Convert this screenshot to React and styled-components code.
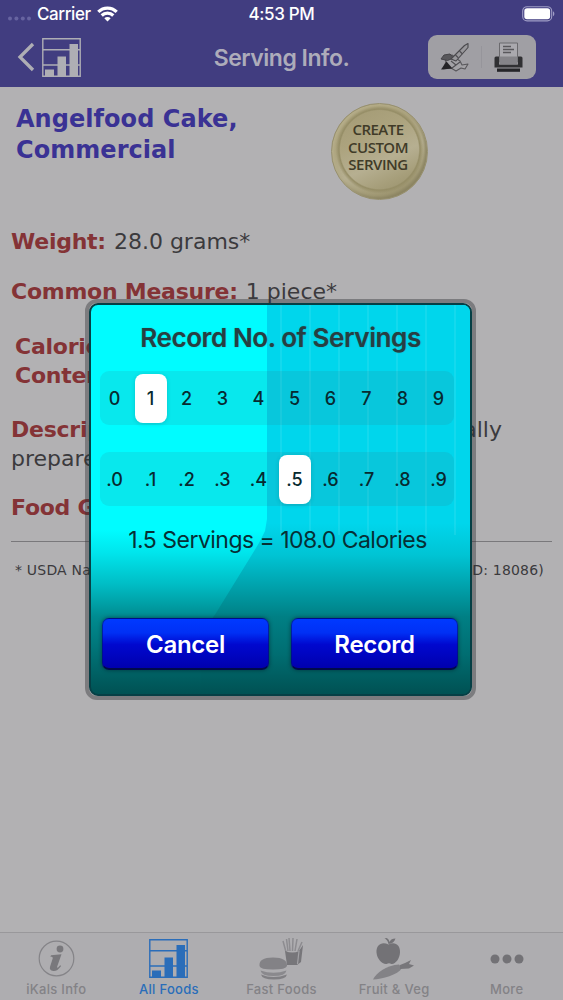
import React from 'react'
import styled, { createGlobalStyle } from "styled-components";
import {useState} from "react"

const GlobalStyle = createGlobalStyle`
  * { box-sizing: border-box; }
  body {
    margin: 0;
    background: #b2b1b3;
    font-family: Inter, "Liberation Sans", sans-serif;
  }
`;

const Screen = styled.div`
  position: relative;
  width: 563px;
  height: 1000px;
  display: flex;
  flex-direction: column;
  overflow: hidden;
  background: #b2b1b3;
`;

const Header = styled.header`
  height: 87px;
  background: #413d80;
`;

const StatusBar = styled.div`
  height: 28px;
  padding: 0 8px;
  display: grid;
  grid-template-columns: 1fr auto 1fr;
  align-items: center;
  color: #fff;
  font-size: 17px;
  font-weight: 500;
`;
const CarrierBox = styled.div`
  display: flex;
  align-items: center;
  gap: 6px;
`;
const CarrierName = styled.span`
  letter-spacing: -0.4px;
`;
const Clock = styled.span`
  letter-spacing: -0.35px;
`;
const BatteryBox = styled.div`
  display: flex;
  justify-content: flex-end;
`;

const NavBar = styled.div`
  height: 58px;
  padding: 0 27px 0 17px;
  display: grid;
  grid-template-columns: 1fr auto 1fr;
  align-items: center;
`;
const BackButton = styled.button`
  display: flex;
  align-items: center;
  gap: 7px;
  padding: 0;
  border: none;
  background: none;
  color: #aeaeb4;
`;
const NavTitle = styled.h1`
  margin: 1px 0 0 10px;
  font-size: 23px;
  font-weight: 600;
  letter-spacing: -0.5px;
  color: #adacba;
`;
const Tools = styled.div`
  justify-self: end;
  width: 108px;
  height: 44px;
  display: flex;
  border-radius: 9px;
  background: #a09fa4;
`;
const Tool = styled.button`
  flex: 1;
  display: flex;
  align-items: center;
  justify-content: center;
  margin: 11px 0;
  padding: 0;
  border: none;
  border-right: 1px solid ${(props) => props.$divided ? "#96959b" : "transparent"};
  background: none;
`;

const Content = styled.main`
  flex: 1;
  padding: 1px 11px 0;
  font-family: "DejaVu Sans", sans-serif;
  color: #3b3a3d;
`;
const TitleRow = styled.div`
  height: 129px;
  display: flex;
  padding: 15px 0 0 5px;
`;
const FoodName = styled.h2`
  width: 315px;
  margin: 1px 0 0;
  font-size: 24px;
  line-height: 31px;
  letter-spacing: 0.05px;
  color: #3a3294;
`;
const CustomServing = styled.button`
  width: 97px;
  height: 97px;
  padding: 0 3px 8px 0;
  border: 1px solid #97906f;
  border-radius: 50%;
  background:
    radial-gradient(circle at 50% 48%, transparent 0 57%, #958d66 59%, transparent 64%),
    linear-gradient(155deg, #a19872 0%, #aca37e 35%, #b6af91 58%, #a69e7a 75%, #8f8762 100%);
  box-shadow: inset 2px 2px 3px #b6ae8a, inset -2px -2px 3px #8b8462;
  font-family: "Open Sans", sans-serif;
  font-size: 15px;
  font-weight: 600;
  line-height: 17.5px;
  letter-spacing: -0.5px;
  color: #403b28;
`;
const Line = styled.p`
  width: ${(props) => props.$width || "auto"};
  height: ${(props) => props.$height}px;
  margin: 0 0 ${(props) => props.$gap || 0}px;
  padding-left: ${(props) => props.$indent || 0}px;
  display: flex;
  justify-content: ${(props) => props.$split ? "space-between" : "flex-start"};
  gap: 8px;
  font-size: 22px;
  line-height: ${(props) => props.$height}px;
  white-space: nowrap;
`;
const Label = styled.b`
  color: #843336;
  letter-spacing: -0.25px;
`;
const Rule = styled.hr`
  margin: 19px 0 18px;
  border: none;
  border-top: 1px solid #79787b;
`;
const Source = styled.div`
  display: flex;
  justify-content: space-between;
  padding: 0 8px 0 4px;
  font-size: 14px;
  line-height: 20px;
  letter-spacing: 0.2px;
`;

const TabBar = styled.nav`
  height: 68px;
  display: grid;
  grid-template-columns: repeat(5, 1fr);
  border-top: 1px solid #99989b;
  background: #aeadb0;
`;
const Tab = styled.button`
  display: flex;
  flex-direction: column;
  align-items: center;
  padding: 4px 0 0;
  border: none;
  background: none;
  font-family: inherit;
  font-size: 13px;
  line-height: 19px;
  font-weight: 500;
  letter-spacing: 0.3px;
  color: ${(props) => props.$active ? "#2a6db9" : "#838286"};
`;
const TabIcon = styled.span`
  height: 43px;
  display: flex;
  align-items: center;
`;

const Backdrop = styled.div`
  position: absolute;
  inset: 0;
  padding: 299px 0 0 85px;
  display: flex;
  align-items: flex-start;
`;
const Dialog = styled.section`
  position: relative;
  width: 391px;
  height: 401px;
  border: 4px solid rgba(50, 50, 56, .42);
  border-radius: 12px;
`;
const Panel = styled.div`
  position: relative;
  height: 393px;
  padding: 20px 8px 0;
  overflow: hidden;
  border: 2px solid #063f45;
  border-radius: 9px;
  display: flex;
  flex-direction: column;
  align-items: center;
  background: linear-gradient(#00fcff 0, #00fcff 225px, #00e5ec 248px, #00bcc4 280px, #008b90 312px, #006f73 350px, #005153 100%);
`;
const Shade = styled.div`
  position: absolute;
  inset: 0;
  clip-path: polygon(176px 0, 100% 0, 100% 100%, 110px 100%, 110px 330px, 125px 308px, 168px 238px, 174px 226px, 176px 214px);
  background:
    linear-gradient(#00d6ec 0, #00d6ec 218px, #00c4d4 250px, #00a1ab 282px, #007f84 312px, #006d71 350px, #005153 100%);
`;
const Streaks = styled.div`
  position: absolute;
  inset: 0 0 auto 176px;
  height: 230px;
  background: repeating-linear-gradient(90deg, transparent 0 13px, rgba(255, 255, 255, .08) 13px 15px, transparent 15px 29px);
`;
const DialogTitle = styled.h3`
  position: relative;
  margin: 0;
  height: 26px;
  line-height: 26px;
  font-size: 26px;
  font-weight: 600;
  letter-spacing: -0.4px;
  color: #263f43;
  text-shadow: 0 0 1px rgba(70, 50, 50, .5);
  white-space: nowrap;
`;
const Segments = styled.div`
  position: relative;
  width: 354px;
  height: 54px;
  margin: ${(props) => props.$top}px 8px 0 0;
  display: grid;
  grid-template-columns: repeat(10, 36px);
  justify-content: center;
  align-items: center;
  border-radius: 9px;
  background: rgba(60, 100, 115, .13);
`;
const Segment = styled.button`
  height: 49px;
  margin: 0 2px;
  padding: 0;
  border: none;
  border-radius: 8px;
  background: ${(props) => props.$selected ? "#fff" : "none"};
  box-shadow: ${(props) => props.$selected ? "0 1px 4px rgba(0, 60, 70, .2)" : "none"};
  font-family: inherit;
  font-size: 18px;
  font-weight: 500;
  color: #072a30;
`;
const Result = styled.p`
  position: relative;
  margin: 20px 6px 0 0;
  height: 28px;
  line-height: 28px;
  font-size: 23px;
  letter-spacing: -0.52px;
  color: #062f35;
  white-space: nowrap;
`;
const Actions = styled.div`
  position: relative;
  display: flex;
  gap: 22px;
  margin: 64px 1px 0 0;
`;
const Action = styled.button`
  width: 167px;
  height: 52px;
  padding: 1px 0 0;
  border: 1px solid rgba(0, 20, 110, .6);
  border-bottom: 2px solid #000a4a;
  border-radius: 7px;
  background: linear-gradient(#0039ff 0, #0030f5 28%, #0008cf 52%, #0000ae 100%);
  box-shadow: 0 0 4px rgba(0, 30, 40, .65);
  font-family: inherit;
  font-size: 24px;
  font-weight: 600;
  letter-spacing: -0.3px;
  color: #fff;
`;

function ChartIcon() {
  return (
    <svg width="39" height="39" viewBox="0 0 39 39" fill="none" stroke="currentColor">
      <path d="M.8.8h37.4v37.4H.8zM1 11.8h37M1 27h37" strokeWidth="1.4" />
      <path d="M3 38v-6.5h9V38zM15.5 38V18.5H24V38zM27.5 38V6H36v32z" fill="currentColor" stroke="none" />
    </svg>
  )
}

function WifiIcon() {
  return (
    <svg width="21" height="16" viewBox="0 0 21 16" fill="none" stroke="#fff" strokeWidth="3.2">
      <path d="M1.3 5.9a13 13 0 0 1 18.4 0M4.7 9.5a8.2 8.2 0 0 1 11.6 0" />
      <path d="M10.5 15.5l-3.2-3.2a4.5 4.5 0 0 1 6.4 0z" fill="#fff" stroke="none" />
    </svg>
  )
}

function SignalDots() {
  return (
    <svg width="23" height="13" viewBox="0 0 23 13" fill="#6764a0">
      <circle cx="2" cy="10.5" r="2" /><circle cx="8.4" cy="10.5" r="2" />
      <circle cx="14.8" cy="10.5" r="2" /><circle cx="21" cy="10.5" r="2" />
    </svg>
  )
}

function BatteryIcon() {
  return (
    <svg width="33" height="16" viewBox="0 0 33 16">
      <rect x=".7" y=".7" width="29" height="14.2" rx="4.4" fill="none" stroke="#9f9dc5" strokeWidth="1.1" />
      <rect x="2.3" y="2.3" width="25.8" height="11" rx="2.8" fill="#fff" />
      <path d="M31 5.3c1.8.7 1.8 4.3 0 5z" fill="#9f9dc5" />
    </svg>
  )
}

function WriteIcon() {
  return (
    <svg width="31" height="31" viewBox="0 0 31 31" strokeLinejoin="round">
      <path d="M5 14l8-1 5 4 3 2 2 4 6-1-3 5-4-1-5 3-5-3-8 1 3-7z" fill="#a3a2a6" stroke="#58575b" strokeWidth="1.1" />
      <path d="M2 27.5l5.5-8 6 7z" fill="#252427" />
      <path d="M2 17l3-4 6-1 3.500 4-6 2.500z" fill="#59585c" stroke="#454448" />
      <path d="M12 17L25.500 3.500 29 1.500v4L17 19z" fill="#98979b" stroke="#4a494d" strokeWidth="1.1" />
      <path d="M16.500 13l3 3M20.500 9l3 3M12 19l5 4 4-3M13 26l4-3" stroke="#504f53" strokeWidth="1.1" fill="none" />
    </svg>
  )
}

function PrinterIcon() {
  return (
    <svg width="29" height="31" viewBox="0 0 29 31">
      <path d="M5.500 1h18v19h-18z" fill="#aaa9ae" stroke="#6b6a6e" strokeWidth="1" />
      <path d="M9 4.500h8M9 7.500h11M9 10.500h8" stroke="#59585c" strokeWidth="1.3" />
      <path d="M.5 16q0-1.500 1.500-1.500h3v8h19v-8h3q1.500 0 1.500 1.500v9.500h-28z" fill="#303033" />
      <path d="M5.500 14.500h18v8h-18z" fill="#858489" />
      <path d="M3 26.500h23v3.300H3z" fill="#252528" />
    </svg>
  )
}

function InfoIcon() {
  return (
    <svg width="37" height="37" viewBox="0 0 37 37" fill="#79787c">
      <circle cx="18.5" cy="18.5" r="17.3" fill="none" stroke="#858488" strokeWidth="1.2" />
      <circle cx="22" cy="9" r="3.4" />
      <path d="M13 15.3l10.5-1-4.300 12.200c-.4 1.500.6 1.400 1.400.6l1.600-1.800.9.7c-2.800 4-5.400 5.300-7.800 5-3-.3-4-2.200-3.200-4.600l2.600-7.800c.3-1.300-.2-1.900-2.300-1.900z" />
    </svg>
  )
}

function BurgerIcon() {
  return (
    <svg width="46" height="43" viewBox="0 0 46 43">
      <path d="M28 15L25 4M30 14L28.500 2M32 14L31 1M34.500 14L35 1M37 14L39 2M40 14l4-9" stroke="#8d8c90" strokeWidth="1.500" />
      <path d="M27 14q8 3 14 0l4-6-2 17-4 3H29z" fill="#77767a" />
      <path d="M41 14l-1.500 13" stroke="#a3a2a6" strokeWidth="1.200" />
      <path d="M1.500 29q-1-8.500 13.500-8.500T29 29q-1 3.500-14 3.500T1.500 29z" fill="#838286" />
      <path d="M2.500 33.500q13 4.500 26 0-1 5.500-13 5.500t-13-5.500z" fill="#8a898d" />
      <path d="M3 37.500q12 5 26 0-1 5-13 5t-13-5z" fill="#807f83" />
    </svg>
  )
}

function FruitIcon() {
  return (
    <svg width="42" height="43" viewBox="0 0 42 43" fill="#737276">
      <path d="M15.5 7.5c6-3.5 12 0 11.5 8-.3 6-4.5 11.8-8.5 11.4-2-.8-3-.8-5 0C9 27.3 4 22 3.5 15.500 3 7.500 9 4 15.500 7.500z" />
      <path d="M15.500 7C15 4 13.500 2.500 11.500 1.500l2-.5c2 1 2.800 2.500 3 4 1-2.500 3-3.500 6-3.500-1 3.500-3.500 5-7 5.500z" />
      <path d="M0 42.500C3 36 14 28 26 27.500l3 3.500C25 38 9 42 0 42.500z" fill="#838286" />
      <path d="M27 28l5-2 6-3-2 4 5 1.500-5 3-9 .5z" fill="#77767a" />
    </svg>
  )
}

function MoreIcon() {
  return (
    <svg width="34" height="10" viewBox="0 0 34 10" fill="#737276">
      <circle cx="5" cy="5" r="4.5" /><circle cx="17" cy="5" r="4.5" /><circle cx="29" cy="5" r="4.5" />
    </svg>
  )
}

const tabs = [
  { name: "iKals Info", icon: InfoIcon },
  { name: "All Foods", icon: ChartIcon },
  { name: "Fast Foods", icon: BurgerIcon },
  { name: "Fruit & Veg", icon: FruitIcon },
  { name: "More", icon: MoreIcon },
];
const digits = [0, 1, 2, 3, 4, 5, 6, 7, 8, 9];

function App() {
  const [whole, setWhole] = useState(1);
  const [tenths, setTenths] = useState(5);
  const [tab, setTab] = useState("All Foods");
  const servings = whole + tenths / 10;

  return (
    <Screen>
      <GlobalStyle/>
      <Header>
        <StatusBar>
          <CarrierBox>
            <SignalDots/>
            <CarrierName>Carrier</CarrierName>
            <WifiIcon/>
          </CarrierBox>
          <Clock>4:53 PM</Clock>
          <BatteryBox><BatteryIcon/></BatteryBox>
        </StatusBar>
        <NavBar>
          <BackButton>
            <svg width="18" height="30" viewBox="0 0 18 30" fill="none" stroke="currentColor" strokeWidth="3.3">
              <path d="M16 2L3 15l13 13" />
            </svg>
            <ChartIcon/>
          </BackButton>
          <NavTitle>Serving Info.</NavTitle>
          <Tools>
            <Tool $divided><WriteIcon/></Tool>
            <Tool><PrinterIcon/></Tool>
          </Tools>
        </NavBar>
      </Header>

      <Content>
        <TitleRow>
          <FoodName>Angelfood Cake,<br/>Commercial</FoodName>
          <CustomServing>CREATE CUSTOM SERVING</CustomServing>
        </TitleRow>
        <Line $height={50}><Label>Weight:</Label>28.0 grams*</Line>
        <Line $height={50} $gap={15}><Label>Common Measure:</Label>1 piece*</Line>
        <Line $height={29} $indent={4}><Label>Calorie</Label></Line>
        <Line $height={29} $indent={4} $gap={25}><Label>Content:</Label>72.0</Line>
        <Line $height={29} $width="491px" $split><Label>Description:</Label><span>angelfood, commercially</span></Line>
        <Line $height={29} $gap={20}>prepared</Line>
        <Line $height={29}><Label>Food Group:</Label>Baked Foods</Line>
        <Rule/>
        <Source><span>* USDA National Nutrient</span><span>(NDB ID: 18086)</span></Source>
      </Content>

      <TabBar>
        {tabs.map((t)=>
          <Tab key={t.name} $active={t.name === tab} onClick={()=>setTab(t.name)}>
            <TabIcon><t.icon/></TabIcon>
            {t.name}
          </Tab>
        )}
      </TabBar>

      <Backdrop>
        <Dialog>
          <Panel>
            <Shade/>
            <Streaks/>
            <DialogTitle>Record No. of Servings</DialogTitle>
            <Segments $top={20}>
              {digits.map((d)=>
                <Segment key={d} $selected={d === whole} onClick={()=>setWhole(d)}>{d}</Segment>
              )}
            </Segments>
            <Segments $top={27}>
              {digits.map((d)=>
                <Segment key={d} $selected={d === tenths} onClick={()=>setTenths(d)}>.{d}</Segment>
              )}
            </Segments>
            <Result>{servings.toFixed(1)} Servings = {(servings * 72).toFixed(1)} Calories</Result>
            <Actions>
              <Action>Cancel</Action>
              <Action>Record</Action>
            </Actions>
          </Panel>
        </Dialog>
      </Backdrop>
    </Screen>
  )
}

export default App;
